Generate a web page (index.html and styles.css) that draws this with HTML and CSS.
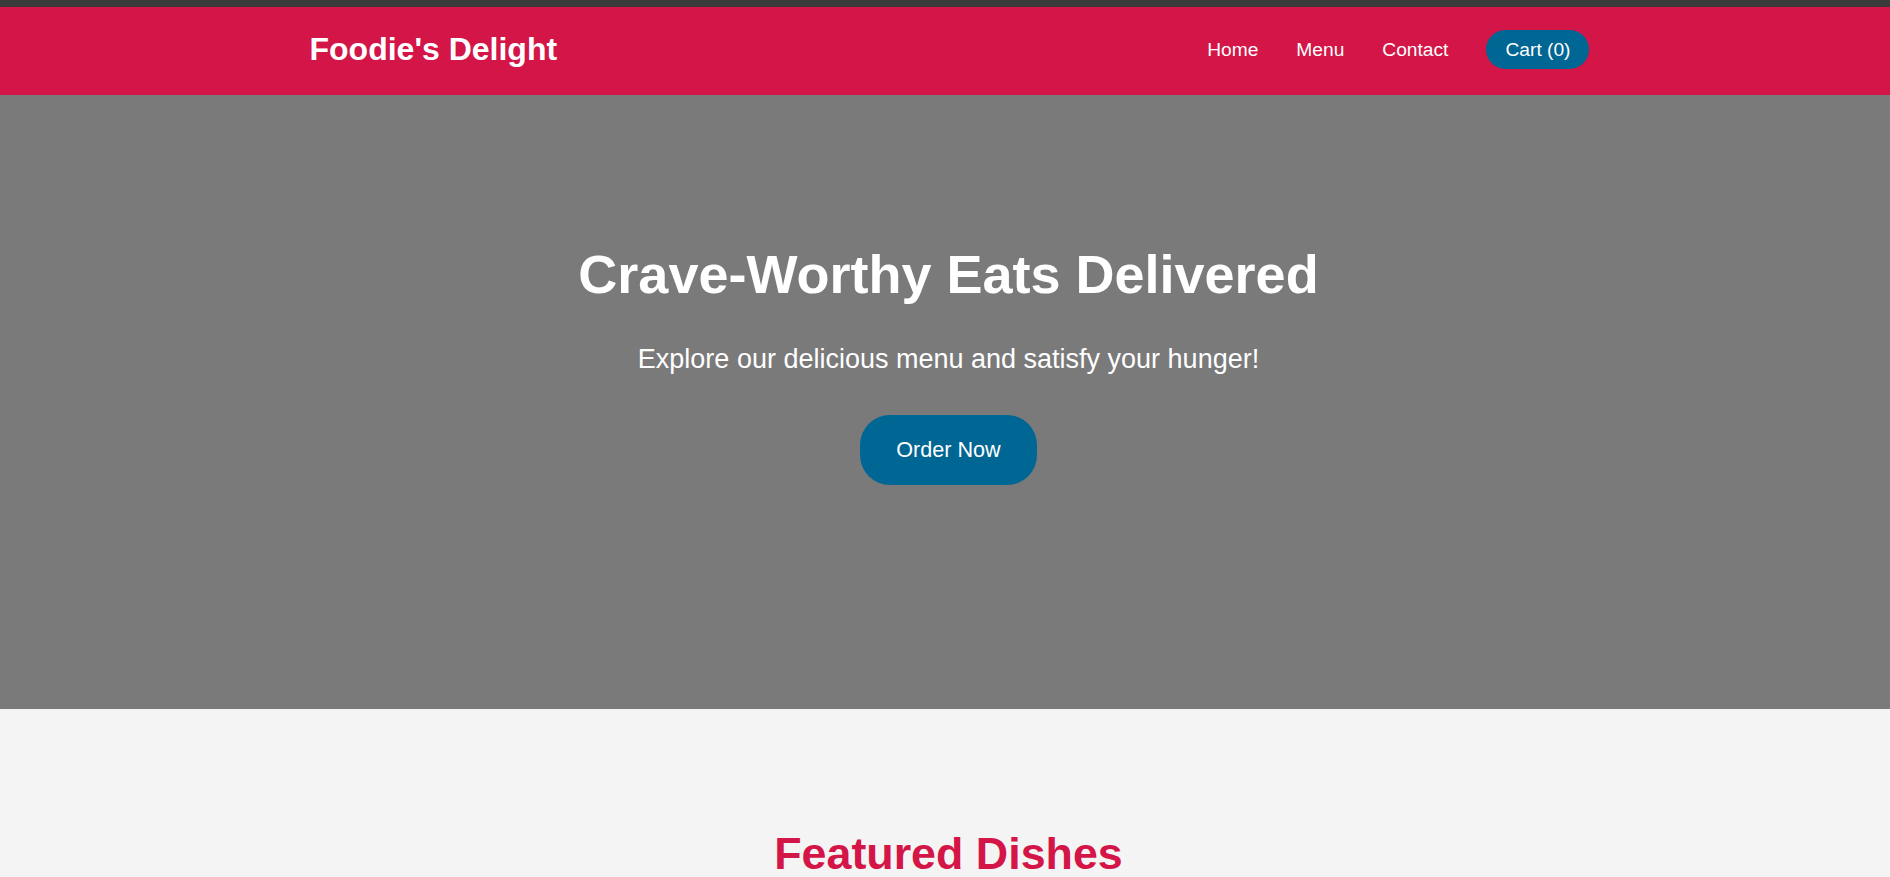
FILE: index.html
```html
<!DOCTYPE html>
<html lang="en">
<head>
<meta charset="utf-8">
<title>Foodie's Delight</title>
<link rel="stylesheet" href="styles.css">
</head>
<body>
<div class="topbar"></div>
<header class="site-header">
  <div class="container header-inner">
    <a class="logo" href="#">Foodie's Delight</a>
    <nav class="nav">
      <a href="#" class="nav-link">Home</a>
      <a href="#" class="nav-link">Menu</a>
      <a href="#" class="nav-link">Contact</a>
      <a href="#" class="cart-btn">Cart (0)</a>
    </nav>
  </div>
</header>
<section class="hero">
  <h1 class="hero-title">Crave-Worthy Eats Delivered</h1>
  <p class="hero-sub">Explore our delicious menu and satisfy your hunger!</p>
  <a href="#" class="order-btn">Order Now</a>
</section>
<section class="featured">
  <h2 class="section-title">Featured Dishes</h2>
</section>
</body>
</html>
```

FILE: styles.css
```css
* { box-sizing: border-box; }

html, body {
  margin: 0;
  padding: 0;
}

body {
  font-family: "Liberation Sans", Arial, sans-serif;
  background: #f4f4f4;
  color: #333;
}

a { text-decoration: none; }

.topbar {
  height: 7px;
  background: #3b3b3b;
}

.site-header {
  background: #d31547;
  padding: 23px 0 26px 7px;
}

.container {
  max-width: 1280px;
  margin: 0 auto;
}

.header-inner {
  display: flex;
  align-items: center;
  justify-content: space-between;
}

.logo {
  color: #fff;
  font-size: 32px;
  font-weight: bold;
  margin-left: 1px;
}

.nav {
  display: flex;
  align-items: center;
  gap: 38px;
}

.nav-link {
  color: #fff;
  font-size: 19.2px;
}

.cart-btn {
  color: #fff;
  font-size: 19.2px;
  background: #006694;
  height: 39px;
  padding: 0 18px 0 19px;
  border-radius: 20px;
  display: flex;
  align-items: center;
}

.hero {
  background: #7a7a7a;
  height: 614px;
  padding: 148px 0 0 7px;
  text-align: center;
  color: #fff;
}

.hero-title {
  margin: 0 0 39px;
  font-size: 54px;
  font-weight: bold;
}

.hero-sub {
  margin: 0 0 40px;
  font-size: 27px;
}

.order-btn {
  display: inline-block;
  background: #006694;
  color: #fff;
  font-size: 21.6px;
  padding: 22px 36px;
  border-radius: 30px;
}

.featured {
  padding: 82px 0 80px 7px;
  text-align: center;
}

.section-title {
  margin: 0.83em 0;
  font-size: 44.8px;
  color: #d31547;
  font-weight: bold;
}
```
